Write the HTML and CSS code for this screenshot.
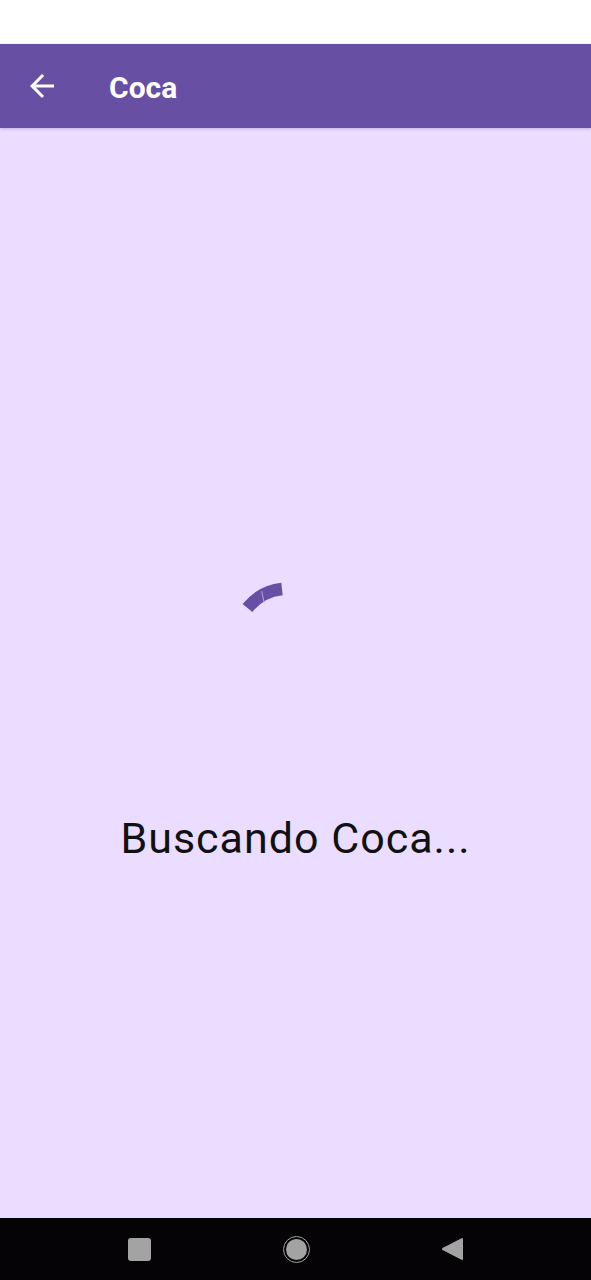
FILE: index.html
```html
<!DOCTYPE html>
<html lang="es">
<head>
<meta charset="utf-8">
<title>Coca</title>
<link rel="stylesheet" href="styles.css">
</head>
<body>
<div class="screen">
  <div class="status-bar"></div>
  <header class="app-bar">
    <svg class="back-icon" viewBox="0 0 24 24" width="36" height="36" aria-label="Atrás">
      <path d="M20 11H7.83l5.59-5.59L12 4l-8 8 8 8 1.41-1.41L7.83 13H20v-2z" fill="#ffffff"/>
    </svg>
    <h1 class="title">Coca</h1>
  </header>
  <main class="content">
    <svg class="spinner" viewBox="0 0 120 120" width="120" height="120" aria-hidden="true">
      <path d="M11.5 28 A51 51 0 0 1 46 9" fill="none" stroke="#6750A4" stroke-width="12.5" stroke-linecap="butt"/>
      <line x1="25.7" y1="11.2" x2="28.2" y2="23" stroke="#c9b8f0" stroke-width="0.8"/>
    </svg>
    <p class="message">Buscando Coca...</p>
  </main>
  <nav class="nav-bar">
    <span class="nav-square"></span>
    <span class="nav-home"><span class="nav-home-dot"></span></span>
    <svg class="nav-back" viewBox="0 0 22 26" width="22" height="26" aria-hidden="true">
      <path d="M20 2.5 Q22 1.3 22 3.5 V22.5 Q22 24.7 20 23.5 L1.5 14 Q0 13 1.5 12 Z" fill="#a3a3a3"/>
    </svg>
  </nav>
</div>
</body>
</html>
```
FILE: styles.css
```css
* { box-sizing: border-box; }
html, body { margin: 0; padding: 0; }
body {
  font-family: Roboto, "Liberation Sans", sans-serif;
  background: #EADDFF;
}
.screen {
  width: 591px;
  height: 1280px;
  display: flex;
  flex-direction: column;
  overflow: hidden;
}
.status-bar {
  height: 44px;
  background: #ffffff;
  flex: none;
}
.app-bar {
  height: 84px;
  flex: none;
  background: #6750A4;
  display: flex;
  align-items: center;
  padding-left: 24px;
  box-shadow: 0 1px 3px rgba(60, 40, 110, 0.25);
  position: relative;
  z-index: 1;
}
.back-icon { display: block; flex: none; }
.title {
  margin: 0 0 0 49px;
  color: #ffffff;
  font-size: 30px;
  font-weight: 700;
  line-height: 30px;
  padding-top: 4px;
}
.content {
  flex: 1;
  background: #EADDFF;
  display: flex;
  flex-direction: column;
  align-items: center;
  padding-top: 452px;
}
.spinner { display: block; flex: none; }
.message {
  margin: 113px 0 0 0;
  font-size: 43px;
  letter-spacing: 1px;
  line-height: 50px;
  color: #111111;
  font-weight: 400;
}
.nav-bar {
  height: 62px;
  flex: none;
  background: #050305;
  display: flex;
  align-items: center;
  padding-left: 128px;
}
.nav-square {
  width: 23px;
  height: 23px;
  background: #a3a3a3;
  border-radius: 3px;
}
.nav-home {
  margin-left: 132px;
  width: 27px;
  height: 27px;
  border-radius: 50%;
  border: 1.5px solid #a3a3a3;
  display: flex;
  align-items: center;
  justify-content: center;
}
.nav-home-dot {
  width: 21px;
  height: 21px;
  border-radius: 50%;
  background: #a3a3a3;
}
.nav-back {
  display: block;
  margin-left: 131px;
}
```
